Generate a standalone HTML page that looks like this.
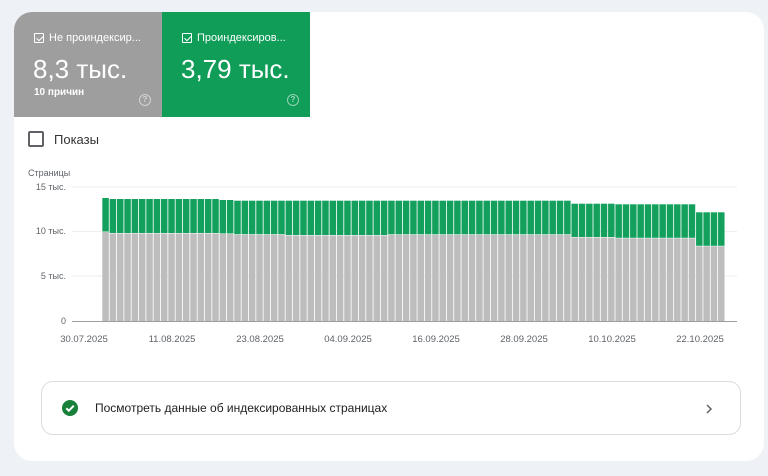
<!DOCTYPE html>
<html><head><meta charset="utf-8"><style>
*{margin:0;padding:0;box-sizing:border-box}
body{width:768px;height:476px;background:#eef2f7;font-family:"Liberation Sans",sans-serif;position:relative;overflow:hidden}
.card{position:absolute;left:14px;top:12px;width:750px;height:449px;background:#fff;border-radius:18px;overflow:hidden}
.tile{position:absolute;top:0;height:105px;width:148px;color:#fff}
.t1{left:0;background:#9e9e9e}
.t2{left:148px;background:#0f9d58}
.lab{position:absolute;left:20px;top:20px;font-size:11px;display:flex;align-items:center;gap:5px;white-space:nowrap}
.cb{width:10px;height:10px;border:1px solid #fff;border-radius:1px;position:relative}
.cb:after{content:"";position:absolute;left:2.5px;top:0px;width:3px;height:6px;border:solid #fff;border-width:0 1.3px 1.3px 0;transform:rotate(45deg)}
.big{position:absolute;left:19px;top:42px;font-size:26px}
.sub{position:absolute;left:20px;top:75px;font-size:10px;font-weight:bold}
.q{position:absolute;right:11px;top:82px;width:12px;height:12px;border:1.3px solid rgba(255,255,255,.55);border-radius:50%;font-size:8px;line-height:10px;text-align:center;color:rgba(255,255,255,.6);font-weight:bold}
.show{position:absolute;left:14px;top:119px;display:flex;align-items:center;gap:10px;font-size:13px;color:#333}
.sq{width:16px;height:16px;border:2px solid #5f6368;border-radius:2px}
.box{position:absolute;left:27px;top:369px;width:700px;height:54px;border:1px solid #dadce0;border-radius:12px;font-size:12px;color:#202124}
.ok{position:absolute;left:20px;top:18px;width:16px;height:16px;border-radius:50%;background:#188038}
</style></head><body>
<div class="card">
<div class="tile t1"><div class="lab"><span class="cb"></span>Не проиндексир...</div><div class="big">8,3 тыс.</div><div class="sub">10 причин</div><div class="q">?</div></div>
<div class="tile t2"><div class="lab"><span class="cb"></span>Проиндексиров...</div><div class="big">3,79 тыс.</div><div class="q">?</div></div>
<div class="show"><span class="sq"></span>Показы</div>
<div class="box"><div class="ok"><svg width="16" height="16"><path d="M4.3 8.3l2.5 2.4 5-5" stroke="#fff" stroke-width="2" fill="none"/></svg></div>
<div style="position:absolute;left:53px;top:19px">Посмотреть данные об индексированных страницах</div>
<svg style="position:absolute;right:26px;top:20px" width="10" height="14"><path d="M3 3l4 4-4 4" stroke="#5f6368" stroke-width="1.5" fill="none"/></svg></div>
</div>
<svg id="ch" style="position:absolute;left:0;top:0" width="768" height="476" font-family="Liberation Sans" font-size="9" fill="#5f6368">
<text x="28" y="176" font-size="9">Страницы</text>
<g stroke="#eeeeee"><line x1="72" x2="737" y1="187" y2="187"/><line x1="72" x2="737" y1="231.5" y2="231.5"/><line x1="72" x2="737" y1="276" y2="276"/></g>
<text x="66" y="190" text-anchor="end">15 тыс.</text><text x="66" y="234" text-anchor="end">10 тыс.</text><text x="66" y="279" text-anchor="end">5 тыс.</text><text x="66" y="324" text-anchor="end">0</text>
<g id="bars"></g>
<line x1="72" x2="737" y1="321.5" y2="321.5" stroke="#9e9e9e"/>
<g text-anchor="middle" font-size="9.5"><text x="84" y="342">30.07.2025</text><text x="172" y="342">11.08.2025</text><text x="260" y="342">23.08.2025</text><text x="348" y="342">04.09.2025</text><text x="436" y="342">16.09.2025</text><text x="524" y="342">28.09.2025</text><text x="612" y="342">10.10.2025</text><text x="700" y="342">22.10.2025</text></g>
</svg>
<script>
var g=document.getElementById('bars'),s='';
function v(x){if(x<108)return[198,232];if(x<220)return[199,233.5];if(x<236)return[200,234];if(x<286)return[200.7,234.7];if(x<388)return[200.7,235.5];if(x<572)return[200.7,234.8];if(x<617)return[203.7,237.5];if(x<697)return[204.3,238.3];return[212.3,246.3];}
for(var i=3;i<=87;i++){var x0=84+7.33*i-3.67,c=x0+3.67,h=v(c);
s+='<rect x="'+x0.toFixed(2)+'" y="'+h[0]+'" width="6.5" height="'+(h[1]-h[0]-0.5)+'" fill="#12a05c"/>';
s+='<rect x="'+x0.toFixed(2)+'" y="'+h[1]+'" width="6.5" height="'+(321-h[1])+'" fill="#bdbdbd"/>';}
g.innerHTML=s;
</script>
</body></html>
